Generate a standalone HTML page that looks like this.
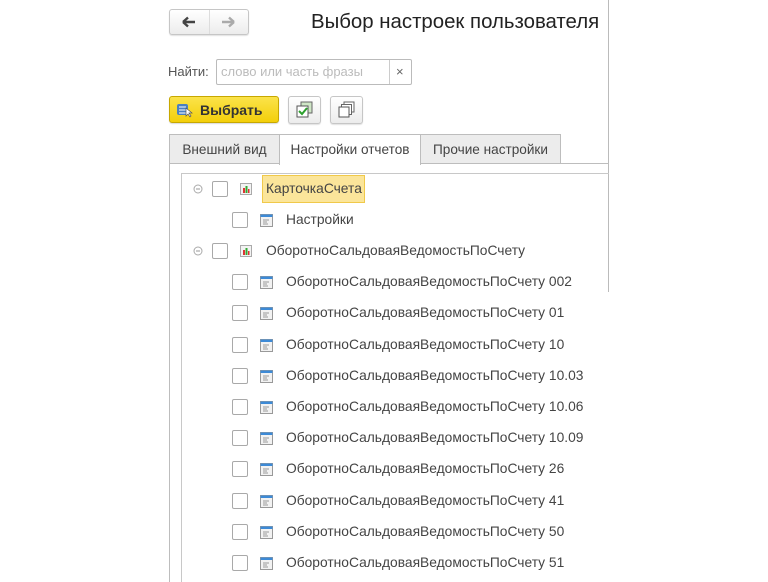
<!DOCTYPE html>
<html><head><meta charset="utf-8"><style>
*{box-sizing:border-box;margin:0;padding:0}
body{width:768px;height:582px;background:#fff;position:relative;overflow:hidden;font-family:"Liberation Sans",Arial,sans-serif;color:#333}
.a{position:absolute}
.btn{position:absolute;border:1px solid #c6c6c6;border-radius:3px;background:linear-gradient(#fff,#ececec);box-shadow:0 1px 1px rgba(0,0,0,.12)}
.row{position:absolute;height:20px;font-size:13.8px;line-height:20px;color:#444;white-space:nowrap}
.cb{position:absolute;width:16px;height:16px;border:1px solid #a9a9a9;border-radius:2px;background:#fff}
.tab{position:absolute;top:134px;height:30px;font-size:13.6px;line-height:29px;text-align:center;border:1px solid #bdbdbd;border-bottom:none;color:#444}
</style></head><body>
<div class="a" style="left:608px;top:0;width:1px;height:292px;background:#bbb"></div>
<div class="btn" style="left:169px;top:9px;width:80px;height:26px"></div>
<div class="a" style="left:209px;top:10px;width:1px;height:24px;background:#ddd"></div>
<svg class="a" style="left:180px;top:14px" width="60" height="16"><path d="M3 8h12M3 8l5-4.5M3 8l5 4.5" stroke="#444" stroke-width="2.4" fill="none"/><path d="M42 8h12M54 8l-5-4.5M54 8l-5 4.5" stroke="#aaa" stroke-width="2.4" fill="none"/></svg>
<div class="a" style="left:311px;top:11px;font-size:20.4px;color:#222;white-space:nowrap">Выбор настроек пользователя</div>
<div class="a" style="left:168px;top:64px;font-size:13px;color:#555">Найти:</div>
<div class="a" style="left:216px;top:59px;width:196px;height:26px;border:1px solid #bbb;border-radius:2px"></div>
<div class="a" style="left:389px;top:60px;width:1px;height:24px;background:#ccc"></div>
<div class="a" style="left:221px;top:64px;font-size:13px;color:#bbb">слово или часть фразы</div>
<div class="a" style="left:396px;top:64px;font-size:13px;color:#666">×</div>
<div class="a" style="left:169px;top:96px;width:110px;height:27px;border:1px solid #c7a800;border-radius:3px;background:linear-gradient(#fbe34a,#f3cf0a);box-shadow:0 1px 1px rgba(0,0,0,.15)"></div>
<svg class="a" style="left:176px;top:102px" width="18" height="16"><rect x="1" y="2" width="11" height="11" rx="2" fill="#4a7fc0"/><path d="M3 5h7M3 8h7M3 11h7" stroke="#fff" stroke-width="1"/><path d="M10 6l6 5-3 0 2 3-1 1-2-3-2 2z" fill="#fff" stroke="#555" stroke-width=".7"/></svg>
<div class="a" style="left:200px;top:102px;font-size:14px;font-weight:bold;color:#333">Выбрать</div>
<div class="btn" style="left:288px;top:96px;width:33px;height:28px"></div>
<svg class="a" style="left:296px;top:101px" width="18" height="17"><rect x="5" y="1" width="11" height="11" fill="#cfe6c6" stroke="#666"/><rect x="1" y="5" width="11" height="11" fill="#fff" stroke="#555"/><path d="M3 10l3 3 5-6" stroke="#2ca02c" stroke-width="2" fill="none"/></svg>
<div class="btn" style="left:330px;top:96px;width:33px;height:28px"></div>
<svg class="a" style="left:338px;top:101px" width="18" height="17"><rect x="6" y="1" width="10" height="10" fill="#fff" stroke="#666"/><rect x="3.5" y="3.5" width="10" height="10" fill="#fff" stroke="#666"/><rect x="1" y="6" width="10" height="10" fill="#fff" stroke="#555"/></svg>
<div class="tab" style="left:169px;width:111px;background:#ececec">Внешний вид</div>
<div class="tab" style="left:279px;width:142px;background:#fff;height:31px;z-index:2">Настройки отчетов</div>
<div class="tab" style="left:420px;width:141px;background:#ececec">Прочие настройки</div>
<div class="a" style="left:169px;top:163px;width:440px;height:1px;background:#bdbdbd"></div>
<div class="a" style="left:169px;top:163px;width:1px;height:419px;background:#bdbdbd"></div>
<div class="a" style="left:181px;top:173px;width:428px;height:1px;background:#c8c8c8"></div>
<div class="a" style="left:181px;top:173px;width:1px;height:409px;background:#c8c8c8"></div>
<div class="a" style="left:262px;top:175px;width:103px;height:28px;background:#fbe59a;border:1px solid #f0c94a"></div>
<div id="t"></div>
<script>
var rows=[[1,"КарточкаСчета"],[2,"Настройки"],[1,"ОборотноСальдоваяВедомостьПоСчету"],[2,"ОборотноСальдоваяВедомостьПоСчету 002"],[2,"ОборотноСальдоваяВедомостьПоСчету 01"],[2,"ОборотноСальдоваяВедомостьПоСчету 10"],[2,"ОборотноСальдоваяВедомостьПоСчету 10.03"],[2,"ОборотноСальдоваяВедомостьПоСчету 10.06"],[2,"ОборотноСальдоваяВедомостьПоСчету 10.09"],[2,"ОборотноСальдоваяВедомостьПоСчету 26"],[2,"ОборотноСальдоваяВедомостьПоСчету 41"],[2,"ОборотноСальдоваяВедомостьПоСчету 50"],[2,"ОборотноСальдоваяВедомостьПоСчету 51"]];
var h="";rows.forEach(function(r,i){var y=Math.round(188.5+i*31.2);
if(r[0]==1){h+='<svg class="a" style="left:193px;top:'+(y-5)+'px" width="10" height="10"><circle cx="5" cy="5" r="4" fill="none" stroke="#aaa"/><path d="M3 5h4" stroke="#999"/></svg>';
h+='<div class="cb" style="left:212px;top:'+(y-8)+'px"></div>';
h+='<svg class="a" style="left:240px;top:'+(y-6)+'px" width="12" height="12"><rect x=".5" y=".5" width="11" height="11" fill="#f3f3f3" stroke="#aaa"/><rect x="3" y="5" width="2" height="5" fill="#d33"/><rect x="5.5" y="3" width="2" height="7" fill="#3a3"/><rect x="8" y="6" width="1.5" height="4" fill="#d33"/></svg>';
h+='<div class="row" style="left:266px;top:'+(y-10)+'px">'+r[1]+'</div>';}
else{h+='<div class="cb" style="left:232px;top:'+(y-8)+'px"></div>';
h+='<svg class="a" style="left:260px;top:'+(y-6)+'px" width="13" height="13"><rect x=".5" y=".5" width="12" height="12" fill="#f2f2f2" stroke="#999"/><rect x=".5" y=".5" width="12" height="2.5" fill="#3d8ad6"/><path d="M3 6h6M3 8h4M3 10h5" stroke="#999"/></svg>';
h+='<div class="row" style="left:286px;top:'+(y-10)+'px">'+r[1]+'</div>';}});
document.getElementById("t").innerHTML=h;
</script>
</body></html>
